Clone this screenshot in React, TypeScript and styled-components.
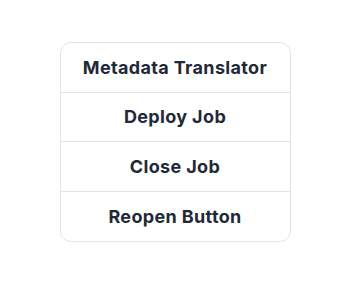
import styled, { createGlobalStyle } from "styled-components";

const GlobalStyle = createGlobalStyle`
  html, body {
    margin: 0;
    padding: 0;
    background: #ffffff;
  }
  body {
    font-family: "Inter", "Liberation Sans", sans-serif;
  }
`;

const Page = styled.div`
  display: flex;
  justify-content: center;
  padding-top: 42px;
`;

const Menu = styled.div`
  width: 231px;
  box-sizing: border-box;
  border: 1px solid #e2e4e9;
  border-radius: 11px;
  display: flex;
  flex-direction: column;
  overflow: hidden;
  background: #ffffff;
`;

const MenuItem = styled.button<{ $last?: boolean }>`
  height: 49.5px;
  display: flex;
  align-items: center;
  justify-content: center;
  border: none;
  border-bottom: ${(p) => (p.$last ? "none" : "1px solid #e2e4e9")};
  background: transparent;
  font-family: "Inter", "Liberation Sans", sans-serif;
  font-size: 18px;
  font-weight: 700;
  letter-spacing: 0.35px;
  color: #1f2937;
  padding: 0;
  cursor: pointer;
`;

const items = ["Metadata Translator", "Deploy Job", "Close Job", "Reopen Button"];

export default function App() {
  return (
    <>
      <GlobalStyle />
      <Page>
        <Menu>
          {items.map((label, i) => (
            <MenuItem key={label} $last={i === items.length - 1}>
              {label}
            </MenuItem>
          ))}
        </Menu>
      </Page>
    </>
  );
}
